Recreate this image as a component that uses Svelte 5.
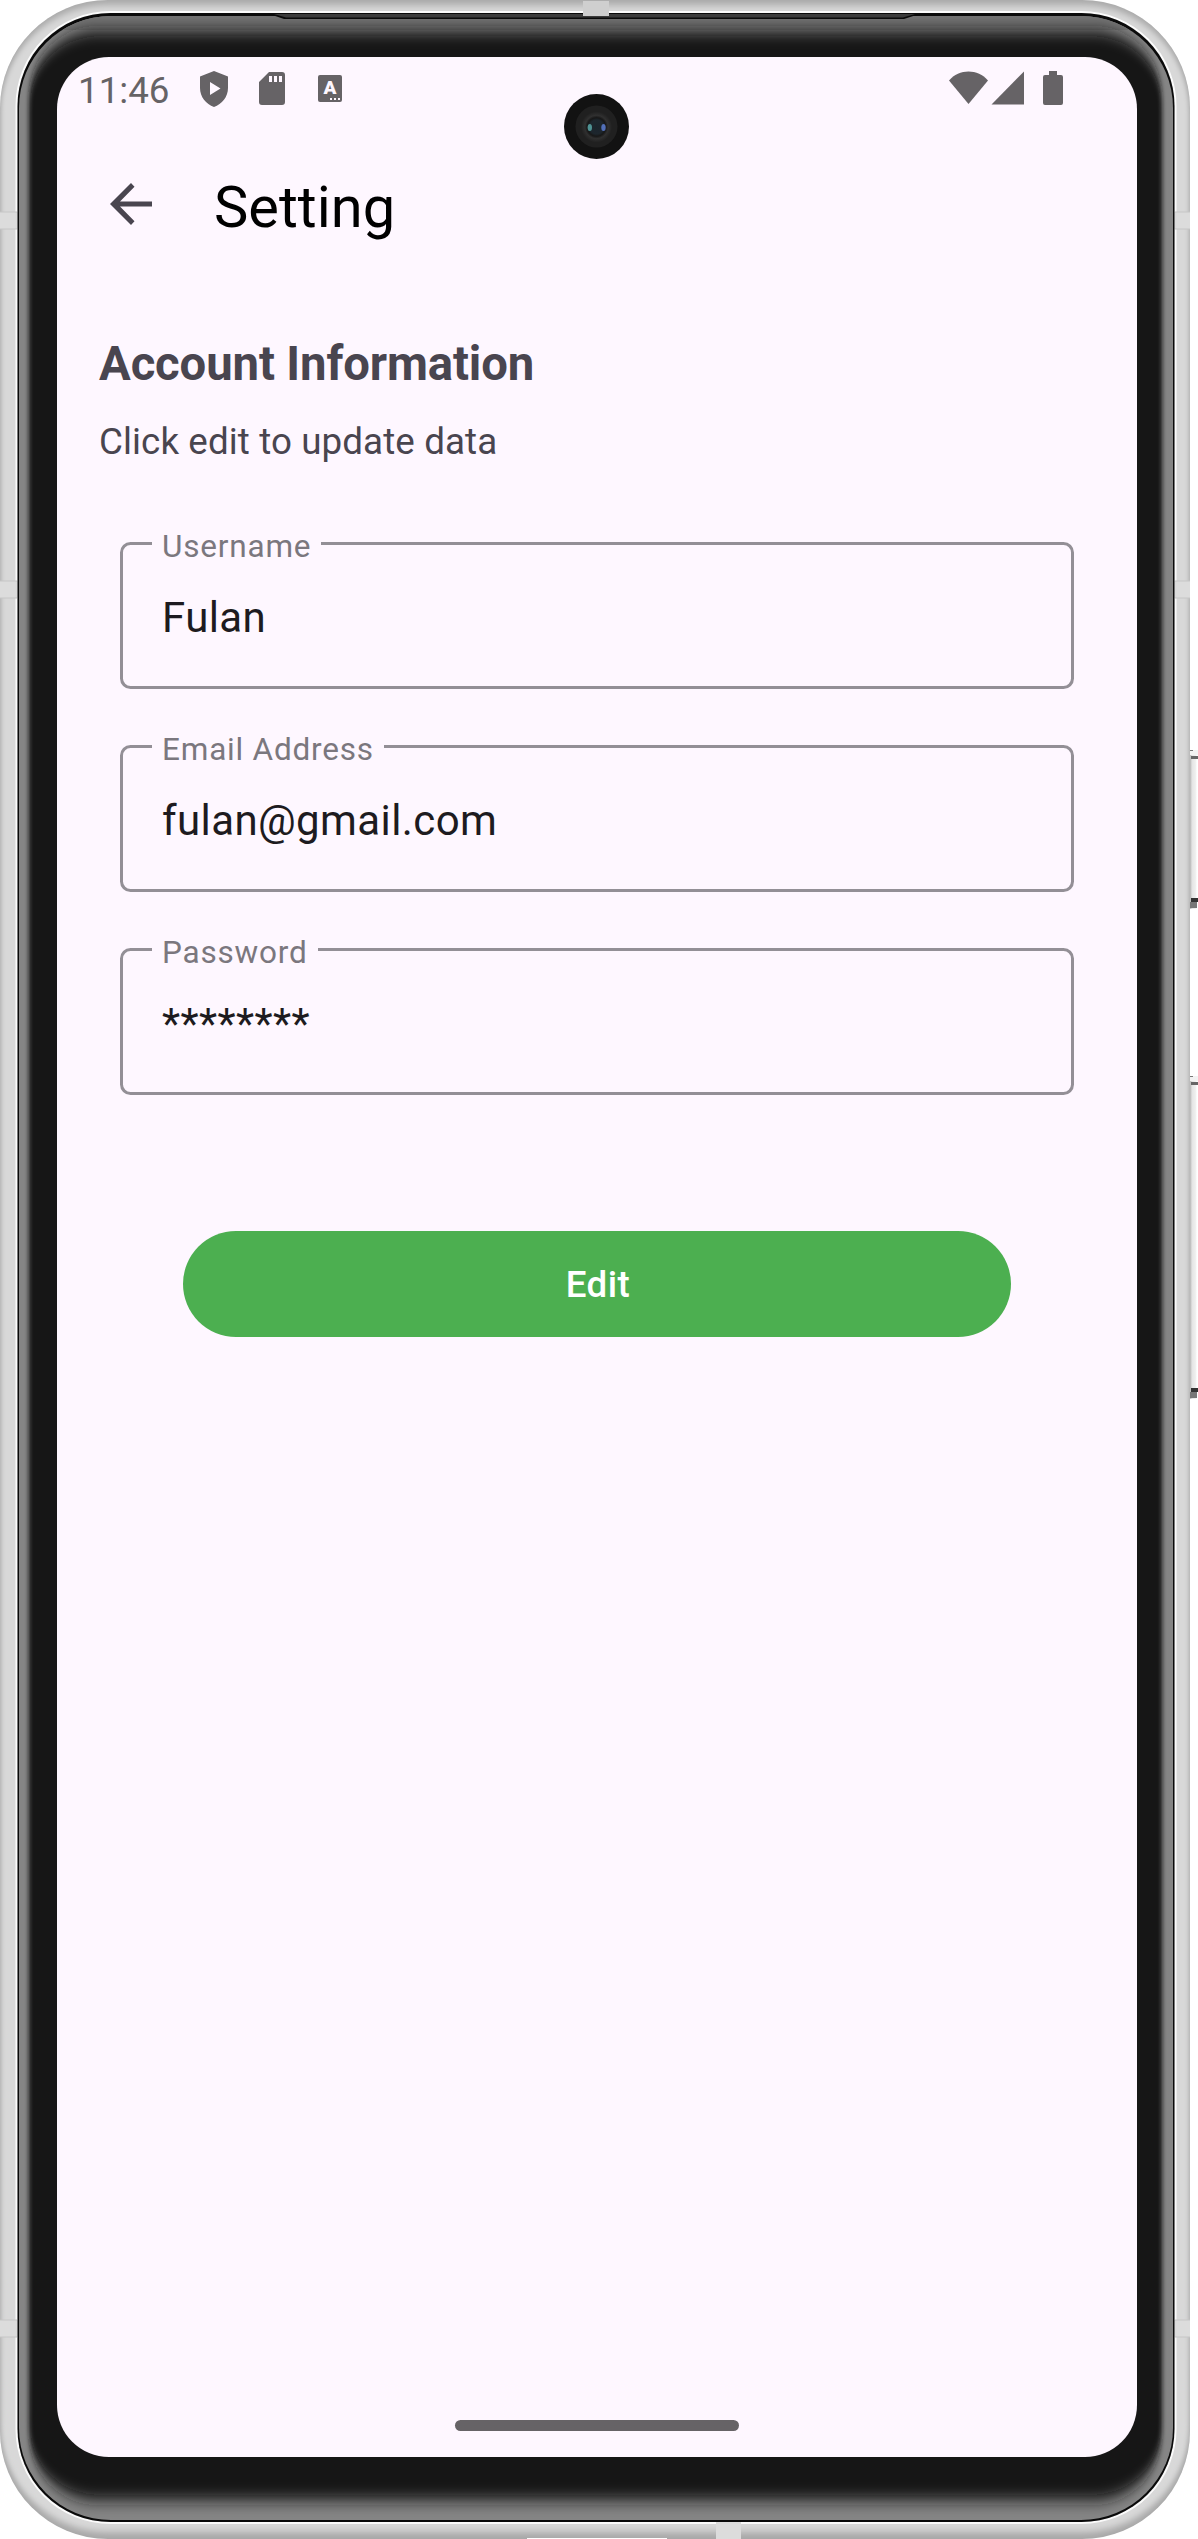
<script>
  const fields = [
    { label: 'Username', value: 'Fulan' },
    { label: 'Email Address', value: 'fulan@gmail.com' },
    { label: 'Password', value: '********' }
  ];
  // Antenna bands on the sides of the metal frame
  const bands = [212, 581, 2320];
  // Hardware buttons on the right side
  const keys = [
    { y: 750, h: 159 },
    { y: 1076, h: 323 }
  ];
</script>

<div class="device">
  <svg class="frame" viewBox="0 0 1198 2539" aria-hidden="true">
    <defs>
      <linearGradient id="key" x1="0" x2="1" y1="0" y2="0">
        <stop offset="0" stop-color="#b5b5b5" />
        <stop offset=".3" stop-color="#e4e4e4" />
        <stop offset=".8" stop-color="#f0f0f0" />
        <stop offset="1" stop-color="#fff" />
      </linearGradient>
      <filter id="rim" x="-5%" y="-5%" width="110%" height="110%">
        <feGaussianBlur stdDeviation="2 3.5" />
      </filter>
      <filter id="glass" x="-5%" y="-5%" width="110%" height="110%">
        <feGaussianBlur stdDeviation="2 8" />
      </filter>
      <clipPath id="body"><rect x="0" y="0" width="1190" height="2539" rx="108" /></clipPath>
      <clipPath id="face"><rect x="19" y="16" width="1154" height="2504" rx="92" /></clipPath>
      <radialGradient id="lens">
        <stop offset="0" stop-color="#1b242c" />
        <stop offset=".45" stop-color="#1d262d" />
        <stop offset=".6" stop-color="#171717" />
        <stop offset=".75" stop-color="#303030" />
        <stop offset="1" stop-color="#202020" />
      </radialGradient>
    </defs>

    {#each keys as k}
      <rect x="1190" y={k.y} width="7" height={k.h} fill="url(#key)" />
      <rect x="1190" y={k.y} width="8" height="5" fill="#f2f2f2" />
      <rect x="1190" y={k.y} width="3" height="1" fill="#777" />
      <rect x="1191" y={k.y + 6} width="7" height="3" fill="#666" />
      <rect x="1191" y={k.y + k.h - 11} width="7" height="4" fill="#333" />
      <rect x="1190" y={k.y + k.h - 7} width="7" height="6" fill="#777" />
    {/each}

    <g clip-path="url(#body)">
      <rect width="1190" height="2539" fill="#a8a8a8" />
      <rect x="1" y="5" width="1188" height="2527" rx="106" fill="#d8d8d8" filter="url(#rim)" />
      <rect x="16.500" y="12" width="1159" height="2511" rx="94" fill="none" stroke="#fbfbfb" stroke-width="2" />
      {#each bands as y}
        <rect x="0" {y} width="18" height="17" fill="#dcdcdc" />
        <rect x="1174" {y} width="16" height="17" fill="#dcdcdc" />
        <path d="M0 {y}H17M0 {y + 17}H17M1175 {y}H1190M1175 {y + 17}H1190" stroke="#c6c6c6" />
      {/each}
      <rect x="716" y="2522" width="25" height="17" fill="#dcdcdc" />
    </g>
    <rect x="527" y="2538" width="140" height="1" fill="#fff" />

    <rect x="17.500" y="13" width="1157" height="2509" rx="93" fill="#0a0a0a" />
    <g clip-path="url(#face)">
      <rect x="19" y="16" width="1154" height="2504" fill="#858585" />
      <rect x="19" y="16" width="1154" height="14" fill="#747474" />
      <rect x="29" y="31" width="1133" height="2469" rx="70" fill="#151515" filter="url(#glass)" />
    </g>
    <path d="M268 13.500H921L904 19H284Z" fill="#0a0a0a" />
    <path d="M274 14H915L903 17.500H286Z" fill="#3c3c3c" />
    <rect x="583" y="1" width="26" height="15" fill="#cfcfcf" />
  </svg>

  <main class="screen">
    <header class="status">
      <span class="clock">11:46</span>
      <svg class="shield" viewBox="0 0 30 36"><path d="M15 0 29 5.500V17C29 26 23 33 15 36 7 33 1 26 1 17V5.500ZM11 11V24L21.500 17.500Z" fill-rule="evenodd" /></svg>
      <svg class="sd" viewBox="0 0 26 33"><path d="M10 0H23Q26 0 26 3V30Q26 33 23 33H3Q0 33 0 30V10ZM10 4V10H13V4ZM15 4V10H18V4ZM20 4V10H23V4Z" fill-rule="evenodd" /></svg>
      <span class="abox"><b>A</b><i></i></span>
      <svg class="signals" viewBox="0 0 114 34">
        <path d="M0 9.500C10-2.500 29-2.500 39 9.500L19.500 33Z" />
        <path d="M42.500 33.500H75V.5Z" />
        <path d="M100 0H108V4H112Q114 4 114 6V32Q114 34 112 34H96Q94 34 94 32V6Q94 4 96 4H100Z" />
      </svg>
    </header>

    <div class="camera">
      <svg viewBox="0 0 65 65">
        <circle cx="32.500" cy="32.500" r="32.500" fill="#121212" />
        <circle cx="32.500" cy="32.500" r="21" fill="#202020" />
        <circle cx="32.500" cy="33" r="15.500" fill="url(#lens)" />
        <ellipse cx="25.800" cy="33.500" rx="2.200" ry="3.500" fill="#4f9293" />
        <ellipse cx="39.500" cy="33.500" rx="2.200" ry="3.500" fill="#526fb8" />
      </svg>
    </div>

    <nav class="appbar">
      <svg viewBox="0 0 42 42"><path d="M42 18.400V23.600H10L24.500 38.200 21 42 0 21 21 0 24.500 3.700 10 18.400Z" /></svg>
      <h1>Setting</h1>
    </nav>

    <section class="content">
      <h2>Account Information</h2>
      <p>Click edit to update data</p>
      <form>
        {#each fields as f}
          <div class="field">
            <span class="label">{f.label}</span>
            <span class="value">{f.value}</span>
          </div>
        {/each}
      </form>
      <button type="button">Edit</button>
    </section>

    <div class="handle"></div>
  </main>
</div>

<style>
  :global(body) { background: #fff; }
  .device {
    display: grid;
    width: 1198px;
    height: 2539px;
    overflow: hidden;
    font-family: Roboto, sans-serif;
  }
  .frame { grid-area: 1 / 1; width: 1198px; height: 2539px; display: block; }
  .screen {
    grid-area: 1 / 1;
    position: relative;
    display: flex;
    flex-direction: column;
    box-sizing: border-box;
    width: 1080px;
    height: 2400px;
    margin: 57px 0 0 57px;
    border-radius: 52px;
    overflow: hidden;
    background: #fef7ff;
    color: #49454f;
  }
  .status {
    display: flex;
    align-items: flex-start;
    height: 91px;
    padding: 14px 74px 0 21px;
    box-sizing: border-box;
    fill: #666366;
    color: #666366;
  }
  .clock { width: 121px; font-size: 36.75px; line-height: 40px; }
  .shield { width: 30px; height: 36px; }
  .sd { width: 26px; height: 33px; margin: 1px 0 0 30px; }
  .abox {
    position: relative;
    width: 24px;
    height: 27px;
    margin: 4px 0 0 33px;
    border-radius: 2px;
    background: #666366;
    color: #fef7ff;
    text-align: center;
  }
  .abox b { display: block; font-size: 19px; font-weight: 900; line-height: 25px; }
  .abox i {
    position: absolute;
    right: 2px;
    bottom: 2px;
    width: 10px;
    height: 2px;
    background: repeating-linear-gradient(90deg, #fef7ff 0 2px, #666366 2px 4px);
  }
  .signals { width: 114px; height: 34px; margin-left: auto; }
  .camera { position: absolute; left: 507px; top: 37px; width: 65px; height: 65px; }
  .camera svg { display: block; }
  .appbar { display: flex; align-items: center; height: 112px; padding-left: 53px; gap: 62px; }
  .appbar svg { width: 42px; height: 42px; fill: #49454f; }
  h1 { margin: 6px 0 0; font-size: 57.75px; font-weight: 400; line-height: 68px; color: #000; }
  .content { display: flex; flex-direction: column; padding: 74px 42px 0; }
  h2 { margin: 0; font-size: 47.25px; font-weight: 700; line-height: 60px; letter-spacing: -0.12px; }
  p { margin: 23px 0 0; font-size: 36.75px; line-height: 50px; letter-spacing: 0.1px; }
  form { display: flex; flex-direction: column; gap: 56px; margin: 75px 21px 0; }
  .field {
    display: flex;
    flex-direction: column;
    align-items: flex-start;
    box-sizing: border-box;
    height: 147px;
    border: 3px solid #938f96;
    border-radius: 10.5px;
    padding-left: 29px;
  }
  .label {
    margin-top: -17px;
    padding: 0 10px;
    background: #fef7ff;
    color: #7b777e;
    font-size: 31.5px;
    line-height: 38px;
    letter-spacing: 0.8px;
  }
  .value {
    margin: 24px 0 0 10px;
    color: #1d1b20;
    font-size: 42px;
    line-height: 56px;
    letter-spacing: 0.4px;
  }
  button {
    height: 106px;
    margin: 136px 84px 0;
    padding: 2px 0 0 2px;
    border: 0;
    border-radius: 53px;
    background: #4caf50;
    color: #fff;
    font: 500 36.75px/50px Roboto, sans-serif;
    letter-spacing: 0.5px;
  }
  .handle {
    width: 284px;
    height: 11px;
    margin: auto auto 26px 398px;
    border-radius: 6px;
    background: #666366;
  }
</style>
